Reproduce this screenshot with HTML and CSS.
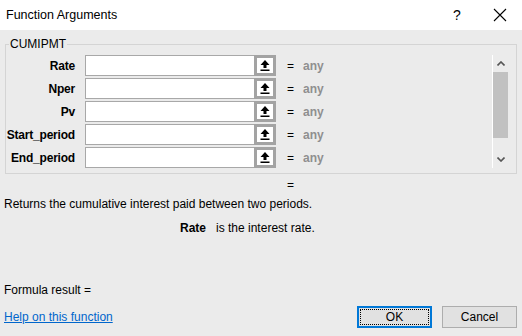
FILE: index.html
```html
<!DOCTYPE html>
<html lang="en">
<head>
    <meta charset="UTF-8">
    <title>Function Arguments</title>
    <link rel="stylesheet" href="styles.css">
</head>
<body>
    <div class="dialog">
        <!-- Title bar -->
        <div class="titlebar">
            <div class="title">Function Arguments</div>
            <div class="help">?</div>
            <div class="close">
                <svg width="14" height="14" viewBox="0 0 14 14"><path d="M1 1 L13 13 M13 1 L1 13" stroke="#000" stroke-width="1.1" fill="none"/></svg>
            </div>
        </div>

        <div class="content">
            <fieldset class="args">
                <legend>CUMIPMT</legend>
                <div class="args-inner">
                    <div class="rows">
                        <div class="row">
                            <label>Rate</label>
                            <div class="input"></div>
                            <div class="pick"><svg width="10" height="11" viewBox="0 0 10 11"><path d="M5 0 L9.5 5 L6.5 5 L6.5 8 L3.5 8 L3.5 5 L0.5 5 Z" fill="#000"/><rect x="0.5" y="9.5" width="9" height="1.5" fill="#000"/></svg></div>
                            <span class="eq">=</span>
                            <span class="val">any</span>
                        </div>
                        <div class="row">
                            <label>Nper</label>
                            <div class="input"></div>
                            <div class="pick"><svg width="10" height="11" viewBox="0 0 10 11"><path d="M5 0 L9.5 5 L6.5 5 L6.5 8 L3.5 8 L3.5 5 L0.5 5 Z" fill="#000"/><rect x="0.5" y="9.5" width="9" height="1.5" fill="#000"/></svg></div>
                            <span class="eq">=</span>
                            <span class="val">any</span>
                        </div>
                        <div class="row">
                            <label>Pv</label>
                            <div class="input"></div>
                            <div class="pick"><svg width="10" height="11" viewBox="0 0 10 11"><path d="M5 0 L9.5 5 L6.5 5 L6.5 8 L3.5 8 L3.5 5 L0.5 5 Z" fill="#000"/><rect x="0.5" y="9.5" width="9" height="1.5" fill="#000"/></svg></div>
                            <span class="eq">=</span>
                            <span class="val">any</span>
                        </div>
                        <div class="row">
                            <label>Start_period</label>
                            <div class="input"></div>
                            <div class="pick"><svg width="10" height="11" viewBox="0 0 10 11"><path d="M5 0 L9.5 5 L6.5 5 L6.5 8 L3.5 8 L3.5 5 L0.5 5 Z" fill="#000"/><rect x="0.5" y="9.5" width="9" height="1.5" fill="#000"/></svg></div>
                            <span class="eq">=</span>
                            <span class="val">any</span>
                        </div>
                        <div class="row">
                            <label>End_period</label>
                            <div class="input"></div>
                            <div class="pick"><svg width="10" height="11" viewBox="0 0 10 11"><path d="M5 0 L9.5 5 L6.5 5 L6.5 8 L3.5 8 L3.5 5 L0.5 5 Z" fill="#000"/><rect x="0.5" y="9.5" width="9" height="1.5" fill="#000"/></svg></div>
                            <span class="eq">=</span>
                            <span class="val">any</span>
                        </div>
                    </div>

                    <!-- Scroll bar -->
                    <div class="scrollbar">
                        <div class="arrow"><svg width="8" height="5" viewBox="0 0 8 5"><path d="M0.5 4.5 L4 1 L7.5 4.5" stroke="#555" stroke-width="1.6" fill="none"/></svg></div>
                        <div class="thumb"></div>
                        <div class="spacer"></div>
                        <div class="arrow"><svg width="8" height="5" viewBox="0 0 8 5"><path d="M0.5 0.5 L4 4 L7.5 0.5" stroke="#555" stroke-width="1.6" fill="none"/></svg></div>
                    </div>
                </div>
            </fieldset>

            <div class="result-eq">=</div>
            <div class="desc">Returns the cumulative interest paid between two periods.</div>
            <div class="arg-desc"><b>Rate</b><span>is the interest rate.</span></div>

            <div class="formula">Formula result =</div>

            <div class="footer">
                <a href="#" class="help-link">Help on this function</a>
                <div class="buttons">
                    <button class="button ok"><span>OK</span></button>
                    <button class="button">Cancel</button>
                </div>
            </div>
        </div>
    </div>
</body>
</html>
```

FILE: styles.css
```css
body {
    margin: 0;
    font-family: "Liberation Sans", Arial, sans-serif;
    font-size: 12px;
    color: #000;
    background: #ebebeb;
}
.dialog {
    width: 522px;
    height: 336px;
    display: flex;
    flex-direction: column;
}
.titlebar {
    height: 30px;
    background: #fff;
    display: flex;
    align-items: center;
    padding-left: 6px;
    font-size: 12.5px;
}
.title {
    flex: 1;
}
.help {
    width: 40px;
    font-size: 14px;
}
.close {
    width: 29px;
    display: flex;
    align-items: center;
}

.content {
    padding: 0 5px 0 4px;
    flex: 1;
    display: flex;
    flex-direction: column;
}
.args {
    margin: 7px 0 0 1px;
    padding: 0 8px 5px 0;
    border: 1px solid #d4d4d4;
    min-width: 0;
}
.args legend {
    margin-left: 3px;
    padding: 0 1px;
    line-height: 15px;
}
.args-inner {
    display: flex;
    padding-top: 3px;
}
.rows {
    flex: 1;
    display: flex;
    flex-direction: column;
    gap: 2px;
}
.row {
    display: flex;
    align-items: center;
    height: 21px;
}
.row label {
    width: 69px;
    text-align: right;
    font-weight: bold;
    margin-right: 10px;
    letter-spacing: -0.2px;
}
.input {
    width: 168px;
    height: 19px;
    background: #fff;
    border: 1px solid #a8a8a8;
    border-right: none;
}
.pick {
    width: 16px;
    height: 15px;
    border: 3px solid #a3a3a3;
    background: #fff;
    display: flex;
    align-items: center;
    justify-content: center;
}
.eq {
    margin-left: 11px;
    width: 16px;
}
.val {
    color: #8f8f8f;
    font-weight: bold;
}
.scrollbar {
    width: 15px;
    border-left: 1px solid #fff;
    display: flex;
    flex-direction: column;
    align-items: center;
}
.scrollbar .arrow {
    height: 17px;
    display: flex;
    align-items: center;
    justify-content: center;
}
.thumb {
    width: 15px;
    height: 66px;
    background: #c1c1c1;
}
.spacer {
    flex: 1;
}

.result-eq {
    margin: 4px 0 0 283px;
    line-height: 14px;
}
.desc {
    margin-top: 5px;
    line-height: 14px;
}
.arg-desc {
    margin: 10px 0 0 176px;
    line-height: 14px;
}
.arg-desc span {
    margin-left: 10px;
}
.formula {
    margin-top: 48px;
    line-height: 14px;
}
.footer {
    margin-top: 9px;
    display: flex;
    align-items: center;
}
.help-link {
    flex: 1;
    color: #0066cc;
}
.buttons {
    display: flex;
    gap: 10px;
}
.button {
    width: 75px;
    height: 22px;
    padding: 0;
    font-family: inherit;
    font-size: 12px;
    background: #e1e1e1;
    border: 1px solid #adadad;
    color: #000;
}
.button.ok {
    border: 2px solid #0078d7;
    padding: 1px;
}
.button.ok span {
    display: flex;
    align-items: center;
    justify-content: center;
    height: 100%;
    border: 1px dotted #000;
    box-sizing: border-box;
}
```
